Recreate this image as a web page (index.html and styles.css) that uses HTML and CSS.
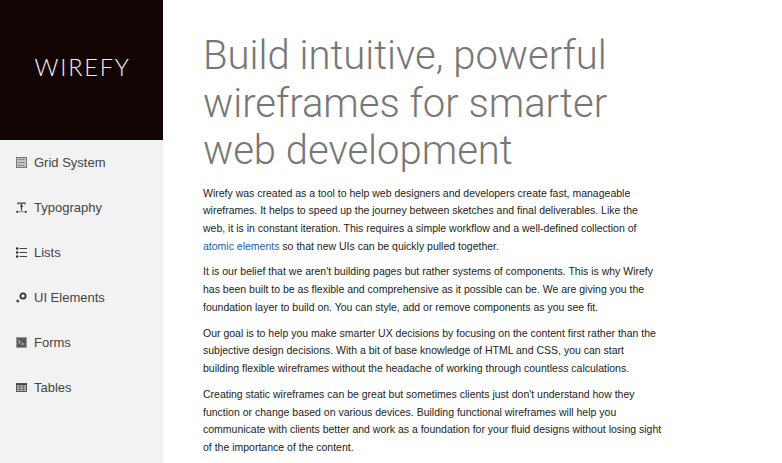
FILE: index.html
```html
<!DOCTYPE html>
<html lang="en">
<head>
<meta charset="utf-8">
<title>Wirefy</title>
<link rel="stylesheet" href="styles.css">
</head>
<body>
<div class="page">
  <aside class="sidebar">
    <div class="brand"><span class="logo">WIREFY</span></div>
    <nav class="nav">
      <a class="nav-item"><svg class="icon" viewBox="0 0 11 11"><rect x="0.5" y="0.5" width="10" height="10" fill="#c4c4c4" stroke="#777"/><path d="M2 2.5h7M2 5.5h7M2 8.5h7" stroke="#777" stroke-width="1.2" stroke-dasharray="1.6 .6"/></svg><span>Grid System</span></a>
      <a class="nav-item"><svg class="icon" viewBox="0 0 11 11"><path d="M2 2.6V1.2h7v1.4M5.5 1.2v7.6M4 4.2h3" stroke="#444" stroke-width="1.2" fill="none"/><path d="M1 9.8h9" stroke="#888" stroke-width=".9"/><circle cx="1.2" cy="9.8" r="1.1" fill="#333"/><circle cx="9.8" cy="9.8" r="1.1" fill="#333"/></svg><span>Typography</span></a>
      <a class="nav-item"><svg class="icon" viewBox="0 0 11 11"><path d="M3.6 1.5H11M3.6 5.5H11M3.6 9.5H11" stroke="#444" stroke-width="1.2"/><circle cx="1.2" cy="1.5" r="1.2" fill="#222"/><circle cx="1.2" cy="5.5" r="1.2" fill="#222"/><circle cx="1.2" cy="9.5" r="1.2" fill="#222"/></svg><span>Lists</span></a>
      <a class="nav-item"><svg class="icon" viewBox="0 0 11 11"><circle cx="7" cy="4" r="2.6" fill="none" stroke="#333" stroke-width="1.8"/><circle cx="1.8" cy="9" r="1.6" fill="#555"/></svg><span>UI Elements</span></a>
      <a class="nav-item"><svg class="icon" viewBox="0 0 11 11"><rect x="0.5" y="0.5" width="10" height="10" fill="#5a5a5a" stroke="#999"/><path d="M2.4 3.2l2 1.6-2 1.6" stroke="#ddd" fill="none" stroke-width=".9"/><path d="M5.2 7h3" stroke="#ddd" stroke-width=".9"/></svg><span>Forms</span></a>
      <a class="nav-item"><svg class="icon" viewBox="0 0 11 11"><rect x="0.5" y="1.5" width="10" height="8" fill="#ccc" stroke="#555"/><path d="M0.5 2.6h10" stroke="#444" stroke-width="1.4"/><path d="M0.5 5.2h10M0.5 7.4h10M3.8 3v6M7.2 3v6" stroke="#555" stroke-width=".8"/></svg><span>Tables</span></a>
    </nav>
  </aside>
  <main class="content">
    <h1 class="title">Build intuitive, powerful wireframes for smarter web development</h1>
    <p>Wirefy was created as a tool to help web designers and developers create fast, manageable wireframes. It helps to speed up the journey between sketches and final deliverables. Like the web, it is in constant iteration. This requires a simple workflow and a well-defined collection of <a class="link">atomic elements</a> so that new UIs can be quickly pulled together.</p>
    <p>It is our belief that we aren't building pages but rather systems of components. This is why Wirefy has been built to be as flexible and comprehensive as it possible can be. We are giving you the foundation layer to build on. You can style, add or remove components as you see fit.</p>
    <p>Our goal is to help you make smarter UX decisions by focusing on the content first rather than the subjective design decisions. With a bit of base knowledge of HTML and CSS, you can start building flexible wireframes without the headache of working through countless calculations.</p>
    <p>Creating static wireframes can be great but sometimes clients just don't understand how they function or change based on various devices. Building functional wireframes will help you communicate with clients better and work as a foundation for your fluid designs without losing sight of the importance of the content.</p>
  </main>
</div>
</body>
</html>
```
FILE: styles.css
```css
* { box-sizing: border-box; }
html, body { margin: 0; height: 100%; overflow: hidden; background: #fff; }
body { font-family: "Liberation Sans", Arial, sans-serif; }
.page { display: flex; height: 463px; }
.sidebar { width: 163px; flex: none; background: #f2f2f2; display: flex; flex-direction: column; }
.brand { height: 140px; background: #130404; display: flex; align-items: center; justify-content: center; padding-left: 2px; }
.logo { color: #f0f0f0; font-family: Lato, sans-serif; font-weight: 300; font-size: 23.5px; letter-spacing: 1.8px; line-height: 1; margin-top: -5px; }
.nav { display: flex; flex-direction: column; }
.nav-item { height: 45px; display: flex; align-items: center; gap: 7px; padding-left: 16px; color: #444; font-size: 13px; }
.icon { width: 11px; height: 11px; flex: none; }
.content { flex: 1; padding: 32px 0 0 40px; }
.title { margin: 0 0 10px; font-family: Roboto, "Liberation Sans", sans-serif; font-size: 40px; line-height: 47.5px; font-weight: 300; color: #777; width: 440px; }
.content p { margin: 0 0 7.6px; font-size: 10.5px; line-height: 17.85px; color: #222; width: 459px; }
.link { color: #1a5fb4; }
```
